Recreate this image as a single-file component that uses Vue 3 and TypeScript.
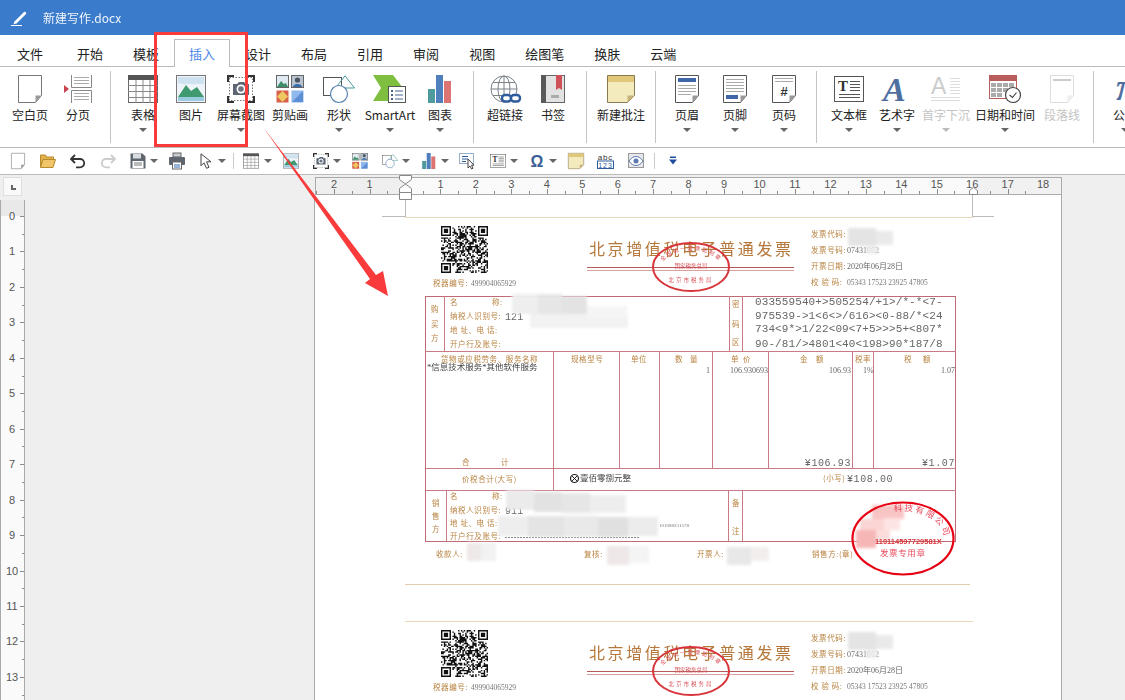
<script setup lang="ts">
interface Icon { w: number; h: number; body: string }

const icons: Record<string, Icon> = {
  blank: { w: 24, h: 28, body: `<path d="M.5.5h23v20l-6 7H.5z" fill="#fff" stroke="#777"/><path d="M17.5 27.5v-7h6z" fill="#999"/>` },
  pagebreak: { w: 28, h: 28, body: `<path d="M0 10l5 4-5 4z" fill="#c9444e"/><path d="M7.5 0v12.5h20V0M7.5 28V15.5h20V28" fill="none" stroke="#888"/><path d="M10 2.5h15M10 5.5h15M10 8.5h15M10 18.5h15M10 21.5h15M10 24.5h15" stroke="#aaa"/>` },
  table: { w: 30, h: 28, body: `<rect x=".5" y=".5" width="29" height="27" fill="#fff" stroke="#666"/><rect width="30" height="5" fill="#555"/><path d="M8 5v23M15 5v23M22 5v23M0 10.5h30M0 16.5h30M0 22.5h30" stroke="#888"/>` },
  picture: { w: 30, h: 28, body: `<rect x=".5" y=".5" width="29" height="27" fill="#eef4f9" stroke="#777"/><path d="M2 2h26v7c-4 1-6-1-9 0s-6-1-9 0-5-2-8 0z" fill="#cfe2ef"/><path d="M2 22l8-12 5 6 6-4 7 10z" fill="#3f9a6f"/><rect x="2" y="22" width="26" height="4" fill="#9bcbe0"/>` },
  shot: { w: 28, h: 28, body: `<rect x="2.5" y="2.5" width="23" height="23" fill="none" stroke="#777" stroke-dasharray="1.5 1.5"/><path d="M7 1H1v6M21 1h6v6M7 27H1v-6M21 27h6v-6" fill="none" stroke="#333" stroke-width="2"/><path d="M6 9h4l2-2h5l2 2h3v11H6z" fill="#5b6573"/><circle cx="14" cy="14" r="4.5" fill="#fff"/><circle cx="14" cy="14" r="2.8" fill="#6a7482"/>` },
  clip: { w: 28, h: 28, body: `<rect x=".5" y=".5" width="12" height="12" fill="#dfeaf2" stroke="#666"/><path d="M1 12l4-6 3 3 2-1 2 4z" fill="#3f8f6a"/><rect x="15.5" y=".5" width="12" height="12" fill="#b8c4d2" stroke="#666"/><circle cx="21.5" cy="5" r="2.6" fill="#4a5560"/><path d="M17 12c0-4 9-4 9 0z" fill="#3a6aa8"/><rect x=".5" y="15.5" width="12" height="12" fill="#d6604a"/><path d="M6.5 16l5.500 5.500-5.500 5.500-5.500-5.500z" fill="#efc860"/><rect x="15.500" y="15.500" width="12" height="12" fill="#8fb8ec"/><path d="M16 27l11-11v11z" fill="#5d8fd6"/>` },
  shapes: { w: 32, h: 28, body: `<rect x=".5" y="2.500" width="18" height="18" fill="none" stroke="#555"/><path d="M22 .8L31.500 13H12.500z" fill="none" stroke="#4a9a9a"/><circle cx="16" cy="19" r="8.500" fill="#fff" stroke="#5580b0" stroke-width="1.200"/>` },
  smart: { w: 34, h: 28, body: `<path d="M0 0h20l10 13-10 13H0l8-13z" fill="#7fbf3f"/><rect x="15.500" y="11.500" width="17" height="16" fill="#fff" stroke="#555"/><path d="M18 15h2v2h-2zM18 19h2v2h-2zM18 23h2v2h-2z" fill="#47658f"/><path d="M22 16h8M22 20h8M22 24h8" stroke="#47658f"/>` },
  chart: { w: 24, h: 28, body: `<rect y="14" width="7" height="14" fill="#4f9a9c"/><rect x="8" width="7" height="28" fill="#4f7fbc"/><rect x="16" y="6" width="7" height="22" fill="#dd7474"/>` },
  link: { w: 31, h: 28, body: `<g fill="none" stroke="#7a8288"><circle cx="14" cy="14" r="13"/><ellipse cx="14" cy="14" rx="6" ry="13"/><path d="M14 1v26M1 14h26M3 7.500h22M3 20.500h22"/></g><g fill="#fff" stroke="#2f5c9c" stroke-width="2.400"><rect x="12" y="20" width="9" height="6.500" rx="3"/><rect x="21" y="20" width="9" height="6.500" rx="3"/></g>` },
  bookmark: { w: 24, h: 28, body: `<rect x=".5" y=".5" width="23" height="27" fill="#e2e2e2" stroke="#666"/><rect width="5" height="28" fill="#595959"/><path d="M15 0h6v15l-3-2-3 2z" fill="#d0505a"/><rect x="10" y="20" width="8" height="3" fill="#aaa"/>` },
  note: { w: 28, h: 28, body: `<path d="M.5.5h27v20l-7 7H.5z" fill="#f3ebbd" stroke="#8a7a50"/><rect x="1" y="1" width="26" height="6" fill="#e0c77a"/><path d="M20.500 27.500v-7h7z" fill="#c9b27a"/>` },
  header: { w: 24, h: 28, body: `<path d="M.5.5h23v20l-6 7H.5z" fill="#fff" stroke="#555"/><rect x="3" y="3" width="18" height="4" fill="#3f66a6"/><path d="M3 10.500h18M3 13.500h18M3 16.500h18M3 19.500h13" stroke="#aaa"/><path d="M17.500 27.500v-7h6z" fill="#999"/>` },
  footer: { w: 24, h: 28, body: `<path d="M.5.5h23v20l-6 7H.5z" fill="#fff" stroke="#555"/><path d="M3 4.500h18M3 7.500h18M3 10.500h18M3 13.500h18M3 16.500h18" stroke="#aaa"/><rect x="3" y="20" width="12" height="4" fill="#3f66a6"/><path d="M17.500 27.500v-7h6z" fill="#999"/>` },
  pagenum: { w: 24, h: 28, body: `<path d="M.5.5h23v20l-6 7H.5z" fill="#fff" stroke="#555"/><path d="M3 3.500h18M3 6.500h18" stroke="#aaa"/><text x="12" y="21" text-anchor="middle" font-family="Liberation Sans" font-weight="700" font-size="13" fill="#333">#</text><path d="M17.500 27.500v-7h6z" fill="#999"/>` },
  textbox: { w: 30, h: 26, body: `<rect x=".5" y=".5" width="29" height="25" fill="#fff" stroke="#555"/><text x="4" y="15" font-family="Liberation Serif" font-weight="700" font-size="15" fill="#333">T</text><path d="M16 5.500h10M16 8.500h10M16 11.500h10M16 14.500h10" stroke="#555"/><path d="M5 18.500h21M5 21.500h21" stroke="#555"/>` },
  wordart: { w: 28, h: 28, body: `<text x="0" y="26" font-family="Liberation Serif" font-style="italic" font-weight="700" font-size="34" fill="#4f6f9f">A</text>` },
  dropcap: { w: 30, h: 27, body: `<text x="0" y="18" font-family="Liberation Sans" font-size="23" fill="#ccc">A</text><path d="M19 2.500h10M19 5.500h10M19 8.500h10M19 11.500h10M19 14.500h10M19 17.500h10M0 21.500h29M0 24.500h29" stroke="#ddd"/>` },
  date: { w: 32, h: 28, body: `<rect x=".5" y=".5" width="27" height="23" fill="#fff" stroke="#b85c5c"/><rect width="28" height="6" fill="#b85c5c"/><path d="M2 8h5v4H2zM8 8h5v4H8zM14 8h5v4h-5zM20 8h5v4h-5zM2 13h5v4H2zM8 13h5v4H8zM14 13h5v4h-5zM20 13h5v4h-5zM2 18h5v4H2zM8 18h5v4H8z" fill="#aaa"/><circle cx="24" cy="20" r="7.500" fill="#fff" stroke="#444" stroke-width="1.200"/><path d="M20.500 20l3 2.500 4-5" fill="none" stroke="#444" stroke-width="1.200"/>` },
  paraline: { w: 24, h: 28, body: `<path d="M.5.5h23v20l-6 7H.5z" fill="#fff" stroke="#ddd"/><rect x="3" y="4" width="18" height="2" fill="#ccc"/><path d="M17.500 27.500v-7h6z" fill="#eee"/>` },
  formula: { w: 30, h: 30, body: `<text x="6" y="26" font-family="Liberation Serif" font-style="italic" font-weight="700" font-size="38" fill="#4f6f9f">π</text>` },
  open: { w: 16, h: 14, body: `<path d="M.5 2V1h5l1 2h7v3H3L.5 13z" fill="#e2b04c" stroke="#b98a2c"/><path d="M3 5.500h12.500L13 13.500H.5z" fill="#f1c66a" stroke="#b98a2c"/>` },
  undo: { w: 16, h: 14, body: `<path d="M5 1L1 5l4 4M1.500 5H10a4.200 4.200 0 010 8.400H6" fill="none" stroke="#333" stroke-width="1.800"/>` },
  redo: { w: 16, h: 14, body: `<path d="M11 1l4 4-4 4M14.500 5H6a4.200 4.200 0 000 8.400h4" fill="none" stroke="#ccc" stroke-width="1.800"/>` },
  save: { w: 16, h: 16, body: `<path d="M.5.5h12l3 3v12H.5z" fill="#5f6670"/><rect x="3" y="1" width="8" height="4.500" fill="#d9dde2"/><rect x="2.500" y="8" width="11" height="7" fill="#fff"/><path d="M4 10h8M4 12h8" stroke="#777"/>` },
  print: { w: 16, h: 16, body: `<rect x="4" y="0" width="8" height="4" fill="#c9ccd0" stroke="#666"/><rect x="0" y="4" width="16" height="8" rx="1" fill="#5f6670"/><rect x="3.500" y="9" width="9" height="7" fill="#fff" stroke="#666"/><path d="M5 12h6M5 14h6" stroke="#2f66b0"/>` },
  cursor: { w: 14, h: 16, body: `<path d="M1 .8v12l3-3 2.500 5.500 2.500-1-2.500-5.500h4.500z" fill="#fff" stroke="#444"/>` },
  selecttext: { w: 16, h: 16, body: `<rect x=".5" y=".5" width="14" height="10" fill="none" stroke="#2f5c9c" stroke-dasharray="1 1"/><path d="M3 3.500h6M3 6h6M3 8.500h4" stroke="#2f5c9c"/><path d="M9 6v9l2-2 1.500 3 1.500-.800-1.500-3h2.500z" fill="#fff" stroke="#444"/>` },
  omega: { w: 16, h: 16, body: `<text x="8" y="14" text-anchor="middle" font-family="Liberation Sans" font-weight="700" font-size="16" fill="#3a5f98">Ω</text>` },
  abc: { w: 17, h: 16, body: `<text x="8.500" y="6.500" text-anchor="middle" font-family="Liberation Sans" font-size="8" letter-spacing=".8" fill="#333">abc</text><rect x=".5" y="8" width="16" height="7.500" fill="#fff" stroke="#2f5c9c"/><text x="8.500" y="14.500" text-anchor="middle" font-family="Liberation Sans" font-size="7" letter-spacing="1" fill="#2f5c9c">123</text>` },
  eye: { w: 16, h: 16, body: `<rect x=".5" y=".5" width="15" height="14" fill="#e8e8ec" stroke="#999"/><path d="M1 8c4-6 10-6 14 0-4 6-10 6-14 0z" fill="#fff" stroke="#5a78b0"/><circle cx="8" cy="8" r="2.500" fill="#5a78b0"/>` },
  more: { w: 8, h: 9, body: `<rect x="1" width="6" height="1.500" fill="#1d4f9c"/><path d="M0 3h8L4 8z" fill="#1d4f9c"/>` },
}

const tabs = ['文件', '开始', '模板', '插入', '设计', '布局', '引用', '审阅', '视图', '绘图笔', '换肤', '云端']

interface Tool { icon: string; label: string; w: number; arrow?: boolean; off?: boolean }

const groups: Tool[][] = [
  [
    { icon: 'blank', label: '空白页', w: 48 },
    { icon: 'pagebreak', label: '分页', w: 48 },
  ],
  [
    { icon: 'table', label: '表格', w: 48, arrow: true },
    { icon: 'picture', label: '图片', w: 48 },
    { icon: 'shot', label: '屏幕截图', w: 52, arrow: true },
    { icon: 'clip', label: '剪贴画', w: 46 },
    { icon: 'shapes', label: '形状', w: 52, arrow: true },
    { icon: 'smart', label: 'SmartArt', w: 50, arrow: true },
    { icon: 'chart', label: '图表', w: 50, arrow: true },
  ],
  [
    { icon: 'link', label: '超链接', w: 46 },
    { icon: 'bookmark', label: '书签', w: 50 },
  ],
  [{ icon: 'note', label: '新建批注', w: 52 }],
  [
    { icon: 'header', label: '页眉', w: 46, arrow: true },
    { icon: 'footer', label: '页脚', w: 50, arrow: true },
    { icon: 'pagenum', label: '页码', w: 48, arrow: true },
  ],
  [
    { icon: 'textbox', label: '文本框', w: 48, arrow: true },
    { icon: 'wordart', label: '艺术字', w: 48, arrow: true },
    { icon: 'dropcap', label: '首字下沉', w: 50, arrow: true, off: true },
    { icon: 'date', label: '日期和时间', w: 68, arrow: true },
    { icon: 'paraline', label: '段落线', w: 46, off: true },
  ],
  [{ icon: 'formula', label: '公式', w: 46, arrow: true }],
]

// m is the gap before each item in the quick access bar
const quick: { icon?: string; kind?: 'arrow' | 'sep'; m: number; w?: number }[] = [
  { icon: 'blank', m: 11, w: 14 },
  { icon: 'open', m: 15 },
  { icon: 'undo', m: 14 },
  { icon: 'redo', m: 14 },
  { icon: 'save', m: 14 },
  { kind: 'arrow', m: 4 },
  { icon: 'print', m: 11 },
  { icon: 'cursor', m: 15, w: 14 },
  { kind: 'arrow', m: 4 },
  { kind: 'sep', m: 7 },
  { icon: 'table', m: 9 },
  { kind: 'arrow', m: 5 },
  { icon: 'picture', m: 11 },
  { icon: 'shot', m: 14 },
  { kind: 'arrow', m: 4 },
  { icon: 'clip', m: 11 },
  { icon: 'shapes', m: 14 },
  { kind: 'arrow', m: 4 },
  { icon: 'chart', m: 11 },
  { kind: 'arrow', m: 4 },
  { icon: 'selecttext', m: 10 },
  { icon: 'textbox', m: 15 },
  { kind: 'arrow', m: 4 },
  { icon: 'omega', m: 11 },
  { kind: 'arrow', m: 4 },
  { icon: 'note', m: 11 },
  { icon: 'abc', m: 13, w: 17 },
  { icon: 'eye', m: 14 },
  { kind: 'sep', m: 10 },
  { icon: 'more', m: 14, w: 8 },
]

const CM = 35.45
const hNums = [-2, -1, 1, 2, 3, 4, 5, 6, 7, 8, 9, 10, 11, 12, 13, 14, 15, 16, 17, 18]
const hTicks = Array.from({ length: 41 }, (_, i) => -2.5 + i / 2).map(n => ({ x: Math.round(405 + n * CM) + 0.5, major: Number.isInteger(n) }))
const vNums = Array.from({ length: 14 }, (_, i) => i)
const vTicks = Array.from({ length: 28 }, (_, i) => ({ y: Math.round(216 + (i / 2) * CM) + 0.5, major: i % 2 === 0 }))

// fake QR cells, seeded so every run gives the same picture
function qrPath(): string {
  const n = 33
  let seed = 77
  let d = ''
  for (let y = 0; y < n; y++) {
    for (let x = 0; x < n; x++) {
      seed = (seed * 1103515245 + 12345) & 0x7fffffff
      const inFinder = (x < 8 && y < 8) || (x >= n - 8 && y < 8) || (x < 8 && y >= n - 8)
      if (!inFinder && (seed >> 16) % 100 < 52) d += `M${x} ${y}h1v1h-1z`
    }
  }
  for (const [fx, fy] of [[0, 0], [n - 7, 0], [0, n - 7]]) {
    d += `M${fx} ${fy}h7v7h-7zM${fx + 1} ${fy + 1}v5h5v-5zM${fx + 2} ${fy + 2}h3v3h-3z`
  }
  return d
}
const qr = qrPath()

interface Line { x: number; y: number; t: string }

// invoice head, shown on both copies
const headLabels: Line[] = [
  { x: 433, y: 286, t: '税器编号:' },
  { x: 811, y: 237, t: '发票代码:' },
  { x: 811, y: 253, t: '发票号码:' },
  { x: 811, y: 269, t: '开票日期:' },
  { x: 811, y: 285, t: '校 验 码:' },
]

const labels: Line[] = [
  { x: 431, y: 312, t: '购' }, { x: 431, y: 327, t: '买' }, { x: 431, y: 341, t: '方' },
  { x: 450, y: 305, t: '名' }, { x: 492, y: 305, t: '称:' },
  { x: 450, y: 319, t: '纳税人识别号:' },
  { x: 450, y: 333, t: '地 址、电 话:' },
  { x: 450, y: 347, t: '开户行及账号:' },
  { x: 732, y: 307, t: '密' }, { x: 732, y: 327, t: '码' }, { x: 732, y: 345, t: '区' },
  { x: 441, y: 362, t: '货物或应税劳务、服务名称' },
  { x: 571, y: 362, t: '规格型号' },
  { x: 631, y: 362, t: '单位' },
  { x: 675, y: 362, t: '数' }, { x: 690, y: 362, t: '量' },
  { x: 731, y: 362, t: '单' }, { x: 743, y: 362, t: '价' },
  { x: 800, y: 362, t: '金' }, { x: 816, y: 362, t: '额' },
  { x: 855, y: 362, t: '税率' },
  { x: 904, y: 362, t: '税' }, { x: 923, y: 362, t: '额' },
  { x: 462, y: 465, t: '合' }, { x: 501, y: 465, t: '计' },
  { x: 462, y: 482, t: '价税合计(大写)' },
  { x: 823, y: 481, t: '(小写)' },
  { x: 432, y: 506, t: '销' }, { x: 432, y: 519, t: '售' }, { x: 432, y: 532, t: '方' },
  { x: 450, y: 499, t: '名' }, { x: 492, y: 499, t: '称:' },
  { x: 450, y: 513, t: '纳税人识别号:' },
  { x: 450, y: 526, t: '地 址、电 话:' },
  { x: 450, y: 539, t: '开户行及账号:' },
  { x: 732, y: 506, t: '备' }, { x: 732, y: 534, t: '注' },
  { x: 436, y: 557, t: '收款人:' },
  { x: 584, y: 557, t: '复核:' },
  { x: 697, y: 557, t: '开票人:' },
  { x: 812, y: 557, t: '销售方:(章)' },
]

const codes = ['033559540+>505254/+1>/*-*<7-', '975539->1<6<>/616><0-88/*<24', '734<9*>1/22<09<7+5>>>5+<807*', '90-/81/>4801<40<198>90*187/8']
const codeY = [305, 319, 332, 347]

// table rules: [x1, y1, x2, y2]
const rules = [
  [425, 351, 956, 351], [425, 468, 956, 468], [425, 490, 956, 490],
  [444, 296, 444, 351], [729, 296, 729, 351], [742, 296, 742, 351],
  [553, 351, 553, 490], [619, 351, 619, 468], [659, 351, 659, 468], [712, 351, 712, 468],
  [768, 351, 768, 468], [852, 351, 852, 468], [873, 351, 873, 468],
  [446, 490, 446, 542], [728, 490, 728, 542], [742, 490, 742, 542],
]

// privacy smudges over the scan: [x, y, w, h, colour]
type Patch = [number, number, number, number, string]
const headSmudges: Patch[] = [
  [848, 228, 28, 18, '#e4e4e4'], [876, 231, 17, 14, '#eaeaea'], [866, 247, 12, 7, '#eeeeee'],
]
const smudges: Patch[] = [
  [512, 294, 26, 20, '#eeeeee'], [538, 294, 24, 21, '#e6e6e6'], [562, 296, 25, 19, '#e3e3e3'],
  [530, 314, 98, 14, '#f2f2f2'], [587, 306, 40, 12, '#f5f5f5'],
  [506, 490, 28, 20, '#ebebeb'], [534, 492, 28, 20, '#e2e2e2'], [562, 493, 28, 20, '#e6e6e6'], [590, 495, 36, 18, '#eeeeee'],
  [498, 516, 30, 20, '#eeeeee'], [528, 516, 36, 21, '#e4e4e4'], [564, 516, 34, 21, '#e9e9e9'], [598, 517, 30, 20, '#e0e0e0'], [628, 517, 30, 19, '#ececec'],
  [467, 543, 14, 18, '#eee8e8'], [481, 543, 15, 18, '#f2f2f2'],
  [607, 546, 22, 19, '#eee8e8'], [629, 546, 20, 17, '#f4f4f4'],
  [727, 547, 24, 18, '#e8e8e8'], [751, 547, 18, 14, '#f3eeee'],
]
const pinkSmudges: Patch[] = [
  [872, 505, 32, 14, '#f9c4c4'], [860, 519, 24, 14, '#fbd5d5'], [884, 518, 16, 12, '#fde4e4'],
  [856, 530, 20, 18, '#f6b6b6'], [876, 530, 14, 10, '#fcdcdc'],
]
</script>

<template>
  <div class="app">
    <header class="titlebar">
      <svg class="pen" width="17" height="16" viewBox="0 0 17 16">
        <path d="M3.500 11.500L13 2c1-1 3 1 2 2l-9.500 9.500-3 .8z" fill="#fff" />
        <path d="M0 15.500h11" stroke="#fff" />
      </svg>
      <span class="doc-name">新建写作.docx</span>
    </header>

    <nav class="tabs">
      <span v-for="tab in tabs" :key="tab" class="tab" :class="{ active: tab === '插入' }">{{ tab }}</span>
    </nav>

    <section class="ribbon">
      <template v-for="(group, i) in groups" :key="i">
        <div v-if="i > 0" class="ribbon-sep"></div>
        <div v-for="tool in group" :key="tool.label" class="tool" :class="{ off: tool.off }" :style="{ width: tool.w + 'px' }">
          <div class="tool-icon">
            <svg :width="icons[tool.icon].w" :height="icons[tool.icon].h" :viewBox="`0 0 ${icons[tool.icon].w} ${icons[tool.icon].h}`" v-html="icons[tool.icon].body"></svg>
          </div>
          <span class="tool-label">{{ tool.label }}</span>
          <i v-if="tool.arrow" class="caret"></i>
        </div>
      </template>
    </section>

    <section class="quickbar">
      <template v-for="(item, i) in quick" :key="i">
        <i v-if="item.kind === 'arrow'" class="caret" :style="{ marginLeft: item.m + 'px' }"></i>
        <i v-else-if="item.kind === 'sep'" class="quick-sep" :style="{ marginLeft: item.m + 'px' }"></i>
        <svg
          v-else
          class="quick-icon"
          :style="{ marginLeft: item.m + 'px', width: (item.w ?? 16) + 'px' }"
          :viewBox="`0 0 ${icons[item.icon!].w} ${icons[item.icon!].h}`"
          v-html="icons[item.icon!].body"
        ></svg>
      </template>
    </section>

    <main class="workspace">
      <div class="corner-cell">
        <div class="corner"><i></i></div>
      </div>

      <svg class="hruler" width="748" height="25" viewBox="314 175 748 25">
        <rect x="315.500" y="177.500" width="746" height="17" fill="#fafafa" stroke="#aaa" />
        <rect x="316" y="178" width="89" height="16" fill="#efefef" />
        <rect x="973" y="178" width="88" height="16" fill="#f1f1f1" />
        <path v-for="t in hTicks" :key="t.x" :d="`M${t.x} ${t.major ? 189 : 191}V194`" stroke="#8c8c8c" />
        <text v-for="n in hNums" :key="n" class="ruler-num" :x="405 + n * CM" y="188" text-anchor="middle">{{ Math.abs(n) }}</text>
        <path d="M399.500 175.500h12v4l-6 4.500-6-4.500zM399.500 192.500v-4l6-4.500 6 4.500v4zM399.500 192.500h12v7h-12z" fill="#fff" stroke="#888" />
        <path d="M969.500 194.500v-4l4-3 4 3v4z" fill="#fff" stroke="#888" />
      </svg>

      <div class="filler"></div>

      <svg class="vruler" width="25" height="505" viewBox="0 195 25 505">
        <rect y="200" width="25" height="16" fill="#e9e9e9" />
        <rect y="216" width="24" height="484" fill="#fafafa" />
        <path d="M.5 200V700M24.500 200V700" stroke="#aaa" />
        <path v-for="t in vTicks" :key="t.y" :d="`M${t.major ? 20 : 22} ${t.y}H24`" stroke="#8c8c8c" />
        <text v-for="n in vNums" :key="n" class="ruler-num" x="12" :y="216 + n * CM + 4" text-anchor="middle">{{ n }}</text>
      </svg>

      <div class="page">
        <svg class="guide" width="746" height="22" viewBox="315 195 746 22">
          <path d="M405.500 195v22M972.500 195v22M382 216.500h23M973 216.500h21" stroke="#bbb" />
        </svg>

        <svg v-for="k in 2" :key="k" class="invoice" width="746" :height="k === 1 ? 404 : 79" :viewBox="`315 217 746 ${k === 1 ? 404 : 79}`">
          <path d="M405 217.500h568" stroke="#e8d8b8" />

          <svg x="441" y="226" width="47" height="47" viewBox="0 0 33 33"><path :d="qr" fill="#111" fill-rule="evenodd" /></svg>
          <text class="num" x="471" y="286">499904065929</text>

          <text class="title" x="589" y="255">北京增值税电子普通发票</text>
          <path d="M587 267.500h207" stroke="#b95a5a" />
          <path d="M587 270.500h207" stroke="#d9a0a0" />

          <g class="seal-small">
            <ellipse cx="691" cy="267" rx="38" ry="24" fill="none" stroke="#d8353a" stroke-width="2" />
            <path :id="`seal-top-${k}`" d="M660 270A31 20 0 0 1 722 270" fill="none" />
            <text class="seal-tiny" text-anchor="middle" letter-spacing="1.500"><textPath :href="`#seal-top-${k}`" startOffset="50%">全国统一发票监制章</textPath></text>
            <text class="seal-tiny" x="691" y="268" text-anchor="middle">国家税务总局</text>
            <text class="seal-tiny" x="691" y="282" text-anchor="middle" letter-spacing="2">北京市税务局</text>
          </g>

          <text class="value" x="847" y="253">07431062</text>
          <text class="value" x="847" y="269">2020年06月28日</text>
          <text class="num" x="847" y="285">05343 17523 23925 47805</text>
          <text v-for="l in headLabels" :key="l.t" class="label" :x="l.x" :y="l.y">{{ l.t }}</text>

          <g class="smudge">
            <rect v-for="(s, i) in headSmudges" :key="i" :x="s[0]" :y="s[1]" :width="s[2]" :height="s[3]" :fill="s[4]" />
          </g>

          <!-- the second copy runs off the window below its head -->
          <g v-if="k === 1">
            <path d="M405 584.500h565" stroke="#e0cda8" />
            <rect x="425.500" y="296.500" width="530" height="245" fill="none" stroke="#c06a75" />
            <path v-for="(r, i) in rules" :key="i" :d="`M${r[0] + (r[0] === r[2] ? 0.5 : 0)} ${r[1] + (r[1] === r[3] ? 0.5 : 0)}L${r[2] + (r[0] === r[2] ? 0.5 : 0)} ${r[3] + (r[1] === r[3] ? 0.5 : 0)}`" stroke="#c97a85" />

            <text v-for="(l, i) in labels" :key="i" class="label" :x="l.x" :y="l.y">{{ l.t }}</text>
            <text v-for="(c, i) in codes" :key="c" class="code" x="755" :y="codeY[i]">{{ c }}</text>

            <text class="value dark" x="427" y="370">*信息技术服务*其他软件服务</text>
            <text class="value end" x="710" y="373">1</text>
            <text class="value end" x="768" y="373">106.930693</text>
            <text class="value end" x="851" y="373">106.93</text>
            <text class="value" x="863" y="373">1%</text>
            <text class="value end" x="955" y="373">1.07</text>

            <text class="money end" x="851" y="466">¥106.93</text>
            <text class="money end" x="955" y="466">¥1.07</text>
            <circle cx="574.500" cy="478.500" r="4" fill="none" stroke="#222" stroke-width="1.200" />
            <path d="M572 476l5 5M577 476l-5 5" stroke="#222" />
            <text class="value dark" x="580" y="481">壹佰零捌元整</text>
            <text class="money" x="847" y="482">¥108.00</text>

            <text class="code small" x="505" y="320">121</text>
            <text class="code small" x="505" y="514">911</text>
            <path d="M505 537.500h135" stroke="#777" stroke-dasharray="2 1" />
            <text class="tiny" x="659" y="527">101088231578</text>

            <g class="smudge">
              <rect v-for="(s, i) in smudges" :key="i" :x="s[0]" :y="s[1]" :width="s[2]" :height="s[3]" :fill="s[4]" />
            </g>
            <g class="smudge">
              <rect v-for="(s, i) in pinkSmudges" :key="i" :x="s[0]" :y="s[1]" :width="s[2]" :height="s[3]" :fill="s[4]" />
            </g>

            <ellipse cx="903" cy="538.500" rx="50.500" ry="36" fill="none" stroke="#e60012" stroke-width="2.200" />
            <path id="seal-big" d="M862 538A41 27 0 0 1 944 538" fill="none" />
            <text class="seal-big" text-anchor="end" letter-spacing="2"><textPath href="#seal-big" startOffset="100%">科技有限公司</textPath></text>
            <text class="seal-id" x="875" y="544">110114597729581X</text>
            <text class="seal-big" x="880" y="556" letter-spacing=".6">发票专用章</text>
          </g>
        </svg>
      </div>
    </main>

    <svg class="callout" width="1125" height="700" viewBox="0 0 1125 700">
      <rect x="155.500" y="33.500" width="91" height="112" fill="none" stroke="#f93b3b" stroke-width="3" />
      <path d="M263 127L376 275l7-4 5 25-23-13 5-4z" fill="#f93b3b" />
    </svg>
  </div>
</template>

<style>
html,
body {
  margin: 0;
  background: #fff;
}
</style>

<style scoped>
.app {
  position: relative;
  width: 1125px;
  height: 700px;
  overflow: hidden;
  display: flex;
  flex-direction: column;
  font-family: "Noto Sans CJK SC", "Liberation Sans", sans-serif;
  color: #222;
}

.titlebar {
  flex: none;
  height: 35px;
  display: flex;
  align-items: center;
  padding-left: 11px;
  background: #3b7bcb;
  color: #fff;
}

.pen {
  margin-right: 15px;
}

.doc-name {
  font-size: 12px;
  opacity: 0.92;
}

.tabs {
  flex: none;
  height: 32px;
  box-sizing: border-box;
  display: flex;
  align-items: flex-end;
  padding-left: 2px;
  border-bottom: 1px solid #bbb;
}

.tab {
  box-sizing: border-box;
  height: 28px;
  padding: 0 14px;
  margin-bottom: -1px;
  font-size: 13px;
  line-height: 27px;
  border: 1px solid transparent;
  border-bottom: none;
}

.tab:first-child {
  margin-right: 4px;
}

.tab.active {
  background: #fff;
  color: #4a86e8;
  border-color: #bbb;
}

.ribbon {
  flex: none;
  height: 81px;
  box-sizing: border-box;
  display: flex;
  padding-left: 6px;
  border-bottom: 1px solid #bbb;
}

.ribbon-sep {
  flex: none;
  width: 1px;
  height: 72px;
  margin: 4px 8px 0;
  background: #c4c4c4;
}

.tool {
  flex: none;
  display: flex;
  flex-direction: column;
  align-items: center;
  padding-top: 7px;
  white-space: nowrap;
}

.tool-icon {
  height: 30px;
  display: flex;
  align-items: center;
  justify-content: center;
}

.tool-icon svg {
  display: block;
  overflow: visible;
}

.tool-label {
  margin-top: 2px;
  font-size: 12px;
  line-height: 17px;
}

.tool.off .tool-label {
  color: #c4c4c4;
}

.tool .caret {
  margin-top: 5px;
}

.tool.off .caret {
  border-top-color: #bbb;
}

.caret {
  flex: none;
  display: block;
  width: 0;
  height: 0;
  border-left: 4px solid transparent;
  border-right: 4px solid transparent;
  border-top: 4px solid #666;
}

.quickbar {
  flex: none;
  height: 27px;
  box-sizing: border-box;
  display: flex;
  align-items: center;
  border-bottom: 1px solid #bbb;
}

.quick-icon {
  flex: none;
  height: 16px;
  display: block;
  overflow: visible;
}

.quick-sep {
  flex: none;
  width: 1px;
  height: 16px;
  background: #ccc;
}

.workspace {
  flex: 1;
  min-height: 0;
  display: grid;
  grid-template-columns: 314px 748px 1fr;
  grid-template-rows: 20px 1fr;
  background: #efefef;
}

.corner-cell {
  padding: 2px 0 0 3px;
}

.corner {
  width: 19px;
  height: 19px;
  box-sizing: border-box;
  background: #fafafa;
  border: 1px solid #dedede;
  position: relative;
}

.corner i {
  position: absolute;
  left: 7px;
  top: 7px;
  width: 5px;
  height: 5px;
  border-left: 2px solid #666;
  border-bottom: 2px solid #666;
  box-sizing: border-box;
}

.hruler {
  display: block;
  position: relative;
  z-index: 1;
}

.vruler {
  display: block;
}

.page {
  overflow: hidden;
  background: #fff;
  border-left: 1px solid #aaa;
  border-right: 1px solid #aaa;
}

.guide,
.invoice {
  display: block;
}

.invoice {
  filter: blur(0.3px);
}

.ruler-num {
  font: 11px "Liberation Sans", sans-serif;
  fill: #555;
}

.label {
  font: 7.5px "Noto Sans CJK SC", sans-serif;
  letter-spacing: 0.6px;
  fill: #b9823f;
}

.title {
  font: 16px "Noto Sans CJK SC", sans-serif;
  letter-spacing: 2.6px;
  fill: #b5773a;
}

.num {
  font: 7.5px "Liberation Serif", serif;
  fill: #777;
}

.value {
  font: 8px "Liberation Serif", "Noto Sans CJK SC", serif;
  fill: #666;
}

.value.dark {
  font-size: 8.5px;
  fill: #444;
}

.end {
  text-anchor: end;
}

.money {
  font: 10px "Liberation Mono", monospace;
  letter-spacing: 0.6px;
  fill: #666;
}

.code {
  font: 11px "Liberation Mono", monospace;
  letter-spacing: 0.1px;
  fill: #666;
}

.code.small {
  font-size: 10px;
}

.tiny {
  font: 5px "Liberation Serif", serif;
  fill: #777;
}

.seal-tiny {
  font: 5.5px "Noto Sans CJK SC", sans-serif;
  fill: #d8535a;
}

.seal-big {
  font: 8.5px "Noto Sans CJK SC", sans-serif;
  fill: #e8485a;
}

.seal-id {
  font: 700 7.5px "Liberation Sans Narrow", "Liberation Sans", sans-serif;
  fill: #d8353a;
}

.smudge {
  filter: blur(1.5px);
}

.callout {
  position: absolute;
  left: 0;
  top: 0;
  pointer-events: none;
}
</style>
